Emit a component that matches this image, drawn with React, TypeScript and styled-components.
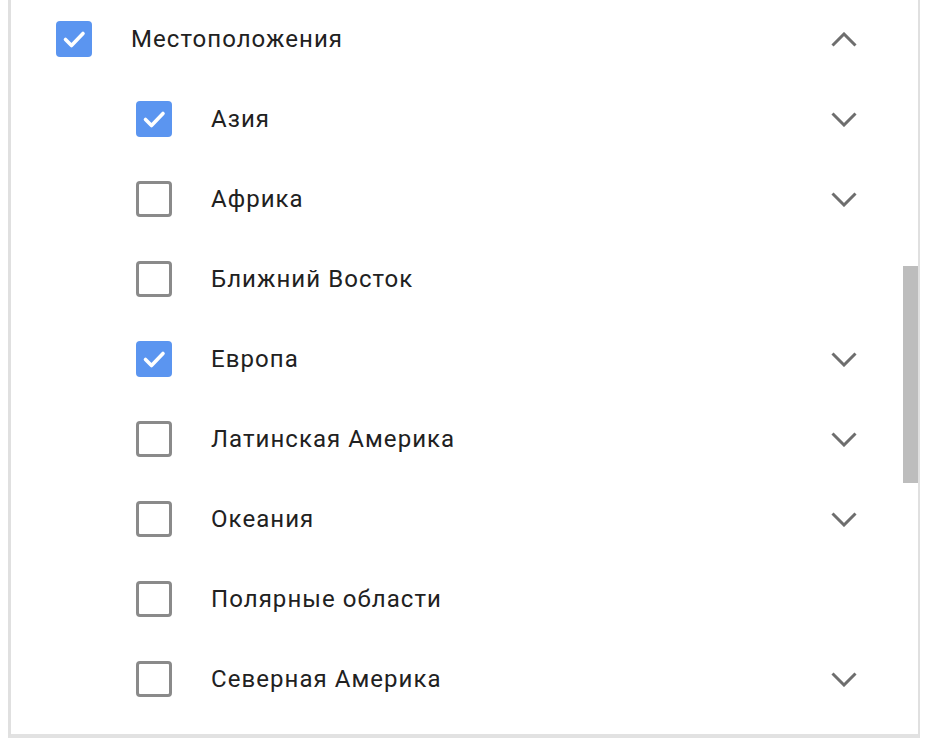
import React from 'react';
import styled, { createGlobalStyle } from 'styled-components';

const GlobalStyle = createGlobalStyle`
  html, body {
    margin: 0;
    padding: 0;
    background: #ffffff;
    font-family: Roboto, "Noto Sans", Arial, sans-serif;
  }
`;

const Page = styled.div`
  width: 928px;
  height: 746px;
  overflow: hidden;
  background: #fff;
  display: flex;
  align-items: flex-start;
`;

const Panel = styled.div`
  margin-left: 8px;
  width: 912px;
  height: 738px;
  box-sizing: border-box;
  border-left: 3px solid #e0e0e0;
  border-right: 2px solid #e0e0e0;
  border-bottom: 4px solid #e2e2e2;
  display: flex;
`;

const List = styled.ul`
  list-style: none;
  margin: -1px 0 0;
  padding: 0 46px 0 45px;
  flex: 1;
`;

const Row = styled.li<{ $level: number }>`
  height: 80px;
  display: flex;
  align-items: center;
  padding-left: ${({ $level }) => $level * 80}px;
`;

const Box = styled.span<{ $checked: boolean }>`
  width: 36px;
  height: 36px;
  box-sizing: border-box;
  border-radius: 4px;
  flex-shrink: 0;
  display: flex;
  align-items: center;
  justify-content: center;
  background: ${({ $checked }) => ($checked ? '#5b95f0' : '#fff')};
  border: ${({ $checked }) => ($checked ? 'none' : '3px solid #8a8a8a')};
`;

const Label = styled.span`
  flex: 1;
  margin-left: 39px;
  font-size: 24px;
  color: #212121;
  letter-spacing: 1.05px;
`;

const Chevron = styled.span`
  width: 26px;
  display: flex;
  justify-content: center;
  color: #6e6e6e;
`;

const Track = styled.div`
  width: 15px;
  flex-shrink: 0;
`;

const Thumb = styled.div`
  margin-top: 266px;
  height: 217px;
  background: #bdbdbd;
`;

const Check = () => (
  <svg width="36" height="36" viewBox="0 0 36 36">
    <polyline
      points="9.5,18.5 15.5,24.5 27,12.5"
      fill="none"
      stroke="#fff"
      strokeWidth="3.6"
      strokeLinecap="round"
      strokeLinejoin="round"
    />
  </svg>
);

const Arrow = ({ up }: { up: boolean }) => (
  <svg width="26" height="15" viewBox="0 0 26 15">
    <polyline
      points={up ? '1.5,13.5 13,2 24.5,13.5' : '1.5,1.5 13,13 24.5,1.5'}
      fill="none"
      stroke="currentColor"
      strokeWidth="3"
    />
  </svg>
);

type Item = { label: string, checked: boolean, level: number, arrow?: 'up' | 'down' };

const items: Item[] = [
  { label: 'Местоположения', checked: true, level: 0, arrow: 'up' },
  { label: 'Азия', checked: true, level: 1, arrow: 'down' },
  { label: 'Африка', checked: false, level: 1, arrow: 'down' },
  { label: 'Ближний Восток', checked: false, level: 1 },
  { label: 'Европа', checked: true, level: 1, arrow: 'down' },
  { label: 'Латинская Америка', checked: false, level: 1, arrow: 'down' },
  { label: 'Океания', checked: false, level: 1, arrow: 'down' },
  { label: 'Полярные области', checked: false, level: 1 },
  { label: 'Северная Америка', checked: false, level: 1, arrow: 'down' },
];

export default function App() {
  return (
    <Page>
      <GlobalStyle />
      <Panel>
        <List>
          {items.map((item) => (
            <Row key={item.label} $level={item.level}>
              <Box $checked={item.checked}>{item.checked && <Check />}</Box>
              <Label>{item.label}</Label>
              <Chevron>{item.arrow && <Arrow up={item.arrow === 'up'} />}</Chevron>
            </Row>
          ))}
        </List>
        <Track>
          <Thumb />
        </Track>
      </Panel>
    </Page>
  );
}
